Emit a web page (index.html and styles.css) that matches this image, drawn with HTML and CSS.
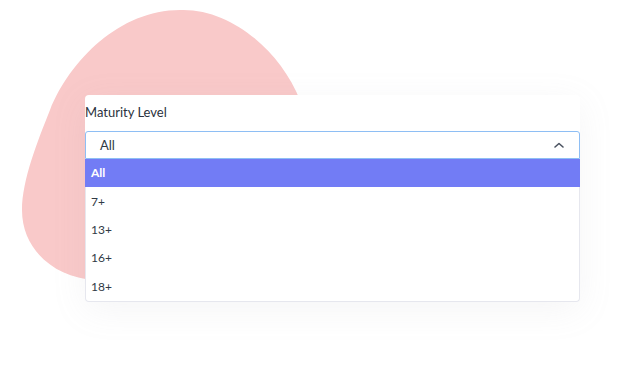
FILE: index.html
```html
<!DOCTYPE html>
<html>
<head>
<meta charset="utf-8">
<link rel="stylesheet" href="styles.css">
</head>
<body>
<div class="stage">
  <svg class="blob" width="638" height="380" viewBox="0 0 638 380">
    <path d="M180 10 C120 10 70 60 50 110 C38 140 22 180 22 210 C22 250 55 278 95 280 L330 290 L320 130 C310 90 300 100 300 100 C280 50 230 8 180 10 Z" fill="#f9c9c9"/>
  </svg>
  <div class="card">
    <div class="label">Maturity Level</div>
    <div class="select">
      <span class="value">All</span>
      <svg class="chev" width="12" height="8" viewBox="0 0 12 8"><path d="M2 6 L6 2.5 L10 6" fill="none" stroke="#4a5260" stroke-width="1.6" stroke-linecap="round" stroke-linejoin="round"/></svg>
    </div>
    <ul class="menu">
      <li class="opt active">All</li>
      <li class="opt">7+</li>
      <li class="opt">13+</li>
      <li class="opt">16+</li>
      <li class="opt">18+</li>
    </ul>
  </div>
</div>
</body>
</html>
```
FILE: styles.css
```css
html, body {
  margin: 0;
  padding: 0;
  background: #ffffff;
}
.stage {
  position: relative;
  width: 638px;
  height: 380px;
  overflow: hidden;
  font-family: "Lato", "Open Sans", sans-serif;
  color: #313a46;
}
.blob {
  position: absolute;
  left: 0;
  top: 0;
}
.card {
  position: relative;
  margin-left: 85px;
  top: 95px;
  width: 495px;
  background: #ffffff;
  border-radius: 4px;
  box-shadow: 0 8px 35px rgba(154, 161, 171, 0.10);
  padding-top: 9px;
}
.label {
  font-size: 13px;
  line-height: 16px;
  height: 16px;
  margin-bottom: 11px;
  color: #2b323d;
}
.select {
  box-sizing: border-box;
  height: 28px;
  border: 1px solid #8ebef4;
  border-radius: 3px 3px 0 0;
  display: flex;
  align-items: center;
  justify-content: space-between;
  padding: 0 14px 1px 14px;
  font-size: 13px;
}
.value {
  color: #313a46;
}
.chev {
  display: block;
}
.menu {
  list-style: none;
  margin: 0;
  padding: 0;
  border: 1px solid #e6e7ee;
  border-top: none;
  border-radius: 0 0 4px 4px;
  box-sizing: border-box;
}
.opt {
  box-sizing: border-box;
  height: 28.4px;
  display: flex;
  align-items: center;
  padding: 0 0 1px 5px;
  font-size: 12px;
  color: #313a46;
}
.opt.active {
  background: #727cf5;
  color: #ffffff;
  font-weight: 700;
  margin: 0 -1px;
  padding-left: 6px;
}
```
